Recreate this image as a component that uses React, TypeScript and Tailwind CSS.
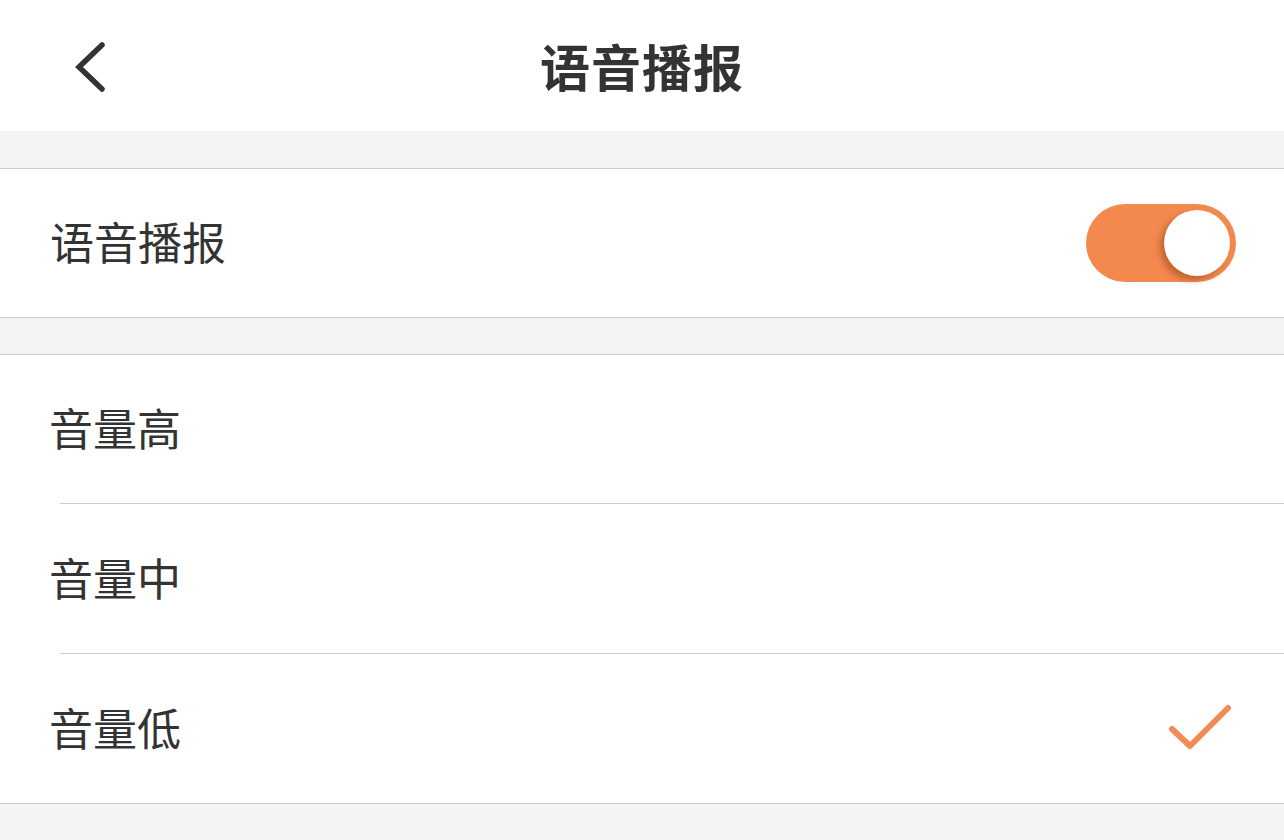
import { useState } from "react";

const font = { fontFamily: '"Noto Sans CJK SC", "Noto Sans", sans-serif' };

function BackIcon() {
  return (
    <svg width="40" height="60" viewBox="0 0 40 60" className="text-[#333333]">
      <path d="M29 10 L6 32 L29 54" fill="none" stroke="currentColor" strokeWidth="5.5" strokeLinecap="round" strokeLinejoin="miter" />
    </svg>
  );
}

function CheckIcon() {
  return (
    <svg width="70" height="56" viewBox="0 0 70 56">
      <path d="M6 28 L24 45 L62 7" fill="none" stroke="#f28b55" strokeWidth="6" strokeLinecap="round" strokeLinejoin="round" />
    </svg>
  );
}

function Toggle({ on, onChange }: { on: boolean; onChange: () => void }) {
  return (
    <button
      onClick={onChange}
      className={`relative w-[150px] h-[78px] rounded-full ${on ? "bg-[#f4894f]" : "bg-[#e5e5e5]"}`}
    >
      <span
        className={`absolute top-[6px] w-[66px] h-[66px] rounded-full bg-white shadow-[-4px_4px_6px_rgba(150,70,20,0.55)] ${on ? "left-[78px]" : "left-[6px]"}`}
      />
    </button>
  );
}

export default function App() {
  const [enabled, setEnabled] = useState(true);
  const [volume, setVolume] = useState("low");

  const options = [
    { key: "high", label: "音量高", cls: "h-[149px] border-b" },
    { key: "mid", label: "音量中", cls: "h-[150px] border-b" },
    { key: "low", label: "音量低", cls: "h-[149px]" },
  ];

  return (
    <div className="w-[1284px] h-[840px] bg-[#f4f4f4] text-[#333333]" style={font}>
      {/* 顶部导航 */}
      <div className="relative h-[131px] bg-white flex items-center justify-center">
        <div className="absolute left-[73px] top-[35px]">
          <BackIcon />
        </div>
        <h1 className="text-[50px] font-bold tracking-[1px] leading-none pb-[2px]">语音播报</h1>
      </div>

      <div className="h-[37px]" />

      {/* 开关 */}
      <div className="h-[150px] bg-white border-y border-[#cccccc] flex items-center justify-between pl-[50px] pr-[48px]">
        <span className="text-[44px] leading-none pb-[4px]">语音播报</span>
        <Toggle on={enabled} onChange={() => setEnabled(!enabled)} />
      </div>

      <div className="h-[36px]" />

      {/* 音量 */}
      <div className="bg-white border-y border-[#cccccc]">
        {options.map((o) => (
          <div
            key={o.key}
            onClick={() => setVolume(o.key)}
            className={`ml-[60px] flex items-center justify-between pr-[48px] border-[#cccccc] ${o.cls}`}
          >
            <span className="text-[44px] leading-none -ml-[11px] pb-[4px]">{o.label}</span>
            {volume === o.key && <CheckIcon />}
          </div>
        ))}
      </div>
    </div>
  );
}
